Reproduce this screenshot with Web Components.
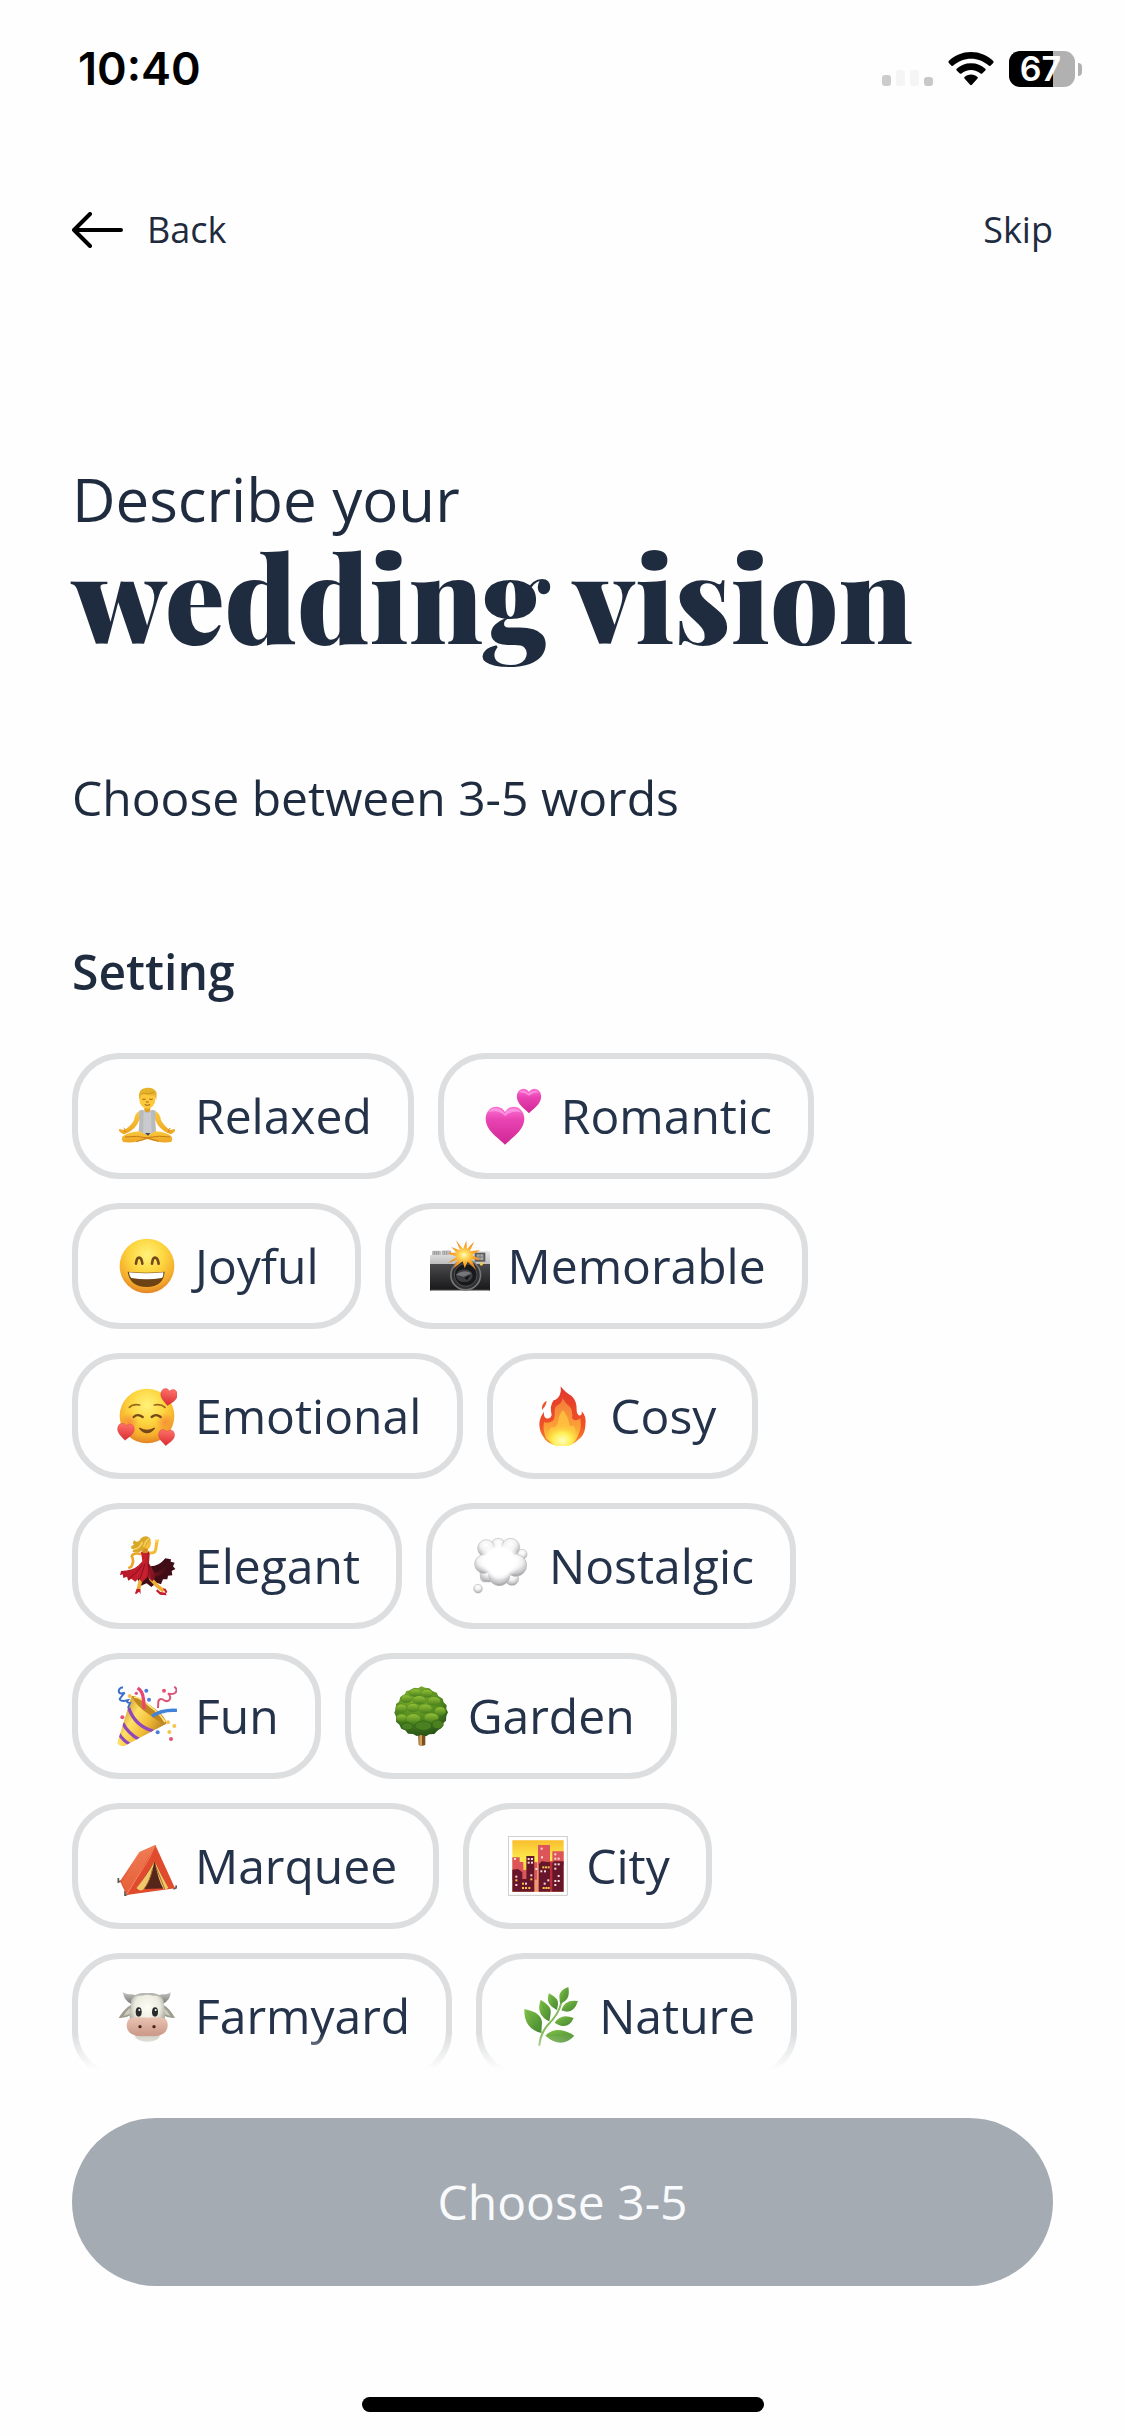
<!DOCTYPE html>
<html lang="en">
<head>
<meta charset="utf-8">
<meta name="viewport" content="width=device-width, initial-scale=1">
<title>Wedding vision</title>
<style>
	html, body {
		height: 100%;
	}

	body {
		margin: 0;
		background: #fefefe;
		color: #1f2b3e;
		font-family: "Open Sans", "Noto Sans", sans-serif;
		--ink: #1f2b3e;
		--chip-ink: #24324a;
		--line: #dcdee0;
		--gutter: 72px;
	}
</style>
</head>
<body>
<vision-screen>
	<status-bar slot="top" time="10:40" battery="67"></status-bar>
	<nav-bar slot="top"></nav-bar>
	<page-title lead="Describe your">wedding vision</page-title>
	<word-group label="Setting" hint="Choose between 3-5 words">
		<word-chip icon="relaxed">Relaxed</word-chip>
		<word-chip icon="romantic">Romantic</word-chip>
		<word-chip icon="joyful">Joyful</word-chip>
		<word-chip icon="memorable">Memorable</word-chip>
		<word-chip icon="emotional">Emotional</word-chip>
		<word-chip icon="cosy">Cosy</word-chip>
		<word-chip icon="elegant">Elegant</word-chip>
		<word-chip icon="nostalgic">Nostalgic</word-chip>
		<word-chip icon="fun">Fun</word-chip>
		<word-chip icon="garden">Garden</word-chip>
		<word-chip icon="marquee">Marquee</word-chip>
		<word-chip icon="city">City</word-chip>
		<word-chip icon="farmyard">Farmyard</word-chip>
		<word-chip icon="nature">Nature</word-chip>
	</word-group>
	<submit-bar slot="bottom">Choose 3-5</submit-bar>
</vision-screen>

<script>
// a heart that is 100 wide, with its centre at 0,0
const heart = 'M0 50C-18 32-50 12-50-18C-50-38-36-50-23-50C-12-50-4-44 0-36C4-44 12-50 23-50C36-50 50-38 50-18C50 12 18 32 0 50Z';

const faceGradient = `
	<radialGradient id="face" cx=".5" cy=".3" r=".7">
		<stop offset="0" stop-color="#fff27a"/>
		<stop offset=".45" stop-color="#fdd640"/>
		<stop offset=".8" stop-color="#f5ad2c"/>
		<stop offset="1" stop-color="#e38326"/>
	</radialGradient>`;

// lit windows of the city picture
const windows = (points, fill) => points.map(([x, y]) => `<rect x="${x}" y="${y}" width="6" height="6" fill="${fill}"/>`).join('');

// every drawing uses a 180 x 180 box
const drawings = {
	relaxed: `
		<defs>
			<linearGradient id="skin" x1="0" y1="0" x2="0" y2="1"><stop offset="0" stop-color="#fbc93d"/><stop offset="1" stop-color="#eda523"/></linearGradient>
		</defs>
		<path d="M82 58h18v20h-18z" fill="#e3a021"/>
		<path d="M66 76Q54 82 51 103Q42 120 22 132L7 129Q3 133 10 139L20 145Q46 136 60 116L70 96ZM116 76Q129 82 132 103Q141 120 159 132L172 129Q177 133 171 139L162 145Q137 136 122 116L112 96Z" fill="url(#skin)"/>
		<path d="M20 126q6 2 4 12M160 126q-6 2-4 12" fill="none" stroke="#c98116" stroke-width="3"/>
		<path d="M66 74L77 71Q91 85 105 71L116 74L115 106L118 150H64L67 106Z" fill="#b9babd"/>
		<path d="M80 76Q91 86 102 76L104 146H78Z" fill="#c9cacd"/>
		<path d="M68 136Q36 138 17 151Q11 160 19 168Q50 173 91 159Q132 173 162 168Q169 160 163 151Q147 138 115 136L91 148Z" fill="url(#skin)"/>
		<path d="M24 153Q60 148 91 156L125 166M160 153Q125 148 98 154L58 167" fill="none" stroke="#c57c18" stroke-width="3"/>
		<path d="M84 141h16l-7 8z" fill="#354963"/>
		<ellipse cx="91" cy="40" rx="24" ry="28" fill="#fdc93b"/>
		<path d="M66 36Q62 10 86 6Q110 2 119 20L118 42L112 28Q94 30 80 23Q74 29 72 28Q70 36 66 40Z" fill="#e6b12b"/>
		<path d="M73 23Q96 25 113 18" fill="none" stroke="#c18d1d" stroke-width="2"/>
		<path d="M76 39q6 3 10 0M97 39q6 3 10 0M87 48h8M83 56q8 4 16 0" fill="none" stroke="#965c14" stroke-width="3"/>`,
	romantic: `
		<defs>
			<linearGradient id="pink" x1="0" y1="0" x2="0" y2="1"><stop offset="0" stop-color="#fb74d4"/><stop offset=".35" stop-color="#e942b2"/><stop offset="1" stop-color="#cf2794"/></linearGradient>
		</defs>
		<path transform="translate(66 119) scale(1.16 1.14)" d="${heart}" fill="url(#pink)"/>
		<path transform="translate(138 45) scale(.73 .74)" d="${heart}" fill="url(#pink)"/>
		<path d="M16 79Q26 64 43 67Q56 70 65 82Q77 65 97 68Q109 70 116 80Q102 74 91 78Q76 80 67 91Q54 77 38 76Q26 75 16 79Z" fill="#ffb1ed" opacity=".6"/>
		<path d="M107 19Q119 8 137 22Q154 9 168 19Q154 17 138 29Q122 17 107 19Z" fill="#ffb1ed" opacity=".6"/>`,
	joyful: `
		<defs>${faceGradient}</defs>
		<circle cx="90" cy="90" r="82" fill="url(#face)"/>
		<path d="M57 83Q59 65 66 65Q74 65 76 83M105 83Q107 65 114 65Q122 65 125 83" fill="none" stroke="#73481a" stroke-width="8" stroke-linecap="round"/>
		<path d="M32 107Q89 113 143 107Q140 152 89 153Q38 152 32 107Z" fill="#6d4315"/>
		<path d="M36 109Q89 115 139 109Q140 123 134 126Q89 134 43 126Q37 121 36 109Z" fill="#fff"/>`,
	memorable: `
		<defs>
			<linearGradient id="silver" x1="0" y1="0" x2="0" y2="1"><stop offset="0" stop-color="#e8e8e8"/><stop offset="1" stop-color="#bbb"/></linearGradient>
			<linearGradient id="black" x1="0" y1="0" x2="0" y2="1"><stop offset="0" stop-color="#4a4a4c"/><stop offset="1" stop-color="#171719"/></linearGradient>
			<radialGradient id="flash"><stop offset="0" stop-color="#fffbd0"/><stop offset=".2" stop-color="#ffe166"/><stop offset=".6" stop-color="#f9a62a"/><stop offset="1" stop-color="#ea7f1a"/></radialGradient>
		</defs>
		<path d="M8 46h23v12H8zM36 45h26v13H36z" fill="#c6c6c6" stroke="#999" stroke-width="2"/>
		<path d="M13 47v9M19 47v9M25 47v9M43 47v9M50 47v9" stroke="#777" stroke-width="2"/>
		<path d="M0 60Q0 57 4 57H60L76 45H175Q180 45 180 50V86H0Z" fill="url(#silver)"/>
		<path d="M0 84H180V164H0Z" fill="url(#black)"/>
		<path d="M2 163H178" stroke="#aaa" stroke-width="3"/>
		<rect x="134" y="50" width="32" height="27" fill="#5c5c5e"/>
		<rect x="140" y="55" width="20" height="17" fill="#aaa"/>
		<path d="M150 55v17M140 63h20" stroke="#666" stroke-width="2"/>
		<circle cx="154" cy="84" r="5" fill="#f5c842"/>
		<circle cx="107" cy="117" r="47" fill="#777"/>
		<circle cx="107" cy="117" r="42" fill="#303032"/>
		<circle cx="107" cy="117" r="34" fill="#18191b" stroke="#666" stroke-width="2"/>
		<ellipse cx="103" cy="119" rx="25" ry="19" fill="#3c3d40"/>
		<path d="M77 116Q101 97 125 112L101 122Z" fill="#75767a"/>
		<path d="M103 126l18-9-10 15z" fill="#111"/>
		<path d="M78 13L99 39L109 14L111 39L132 17L120 45L150 43L126 57L154 72L124 70L138 101L113 77L104 97L98 76L69 98L84 71L54 80L80 62L50 50L80 50L64 33L90 43Z" fill="url(#flash)"/>`,
	emotional: `
		<defs>${faceGradient}
			<radialGradient id="blush"><stop offset="0" stop-color="#f7743c" stop-opacity=".6"/><stop offset="1" stop-color="#f7743c" stop-opacity="0"/></radialGradient>
			<linearGradient id="red" x1="0" y1="0" x2="0" y2="1"><stop offset="0" stop-color="#ff7168"/><stop offset="1" stop-color="#d92c32"/></linearGradient>
		</defs>
		<circle cx="90" cy="90" r="82" fill="url(#face)"/>
		<circle cx="37" cy="108" r="28" fill="url(#blush)"/>
		<circle cx="144" cy="108" r="28" fill="url(#blush)"/>
		<path d="M37 64Q48 53 68 57M112 57Q132 53 144 64" fill="none" stroke="#9b651c" stroke-width="5" stroke-linecap="round"/>
		<path d="M50 93Q62 82 77 93M104 93Q117 82 131 93" fill="none" stroke="#73481a" stroke-width="7" stroke-linecap="round"/>
		<path d="M68 127Q90 153 112 127Q90 139 68 127Z" fill="#73481a" stroke="#73481a" stroke-width="4" stroke-linejoin="round"/>
		<g fill="url(#red)" stroke="#c93435" stroke-width="2">
			<path transform="translate(155 34) rotate(8) scale(.5)" d="${heart}"/>
			<path transform="translate(26 138) rotate(5) scale(.5)" d="${heart}"/>
			<path transform="translate(148 155) rotate(5) scale(.48)" d="${heart}"/>
		</g>`,
	cosy: `
		<defs>
			<linearGradient id="outer" x1="0" y1="0" x2="0" y2="1"><stop offset="0" stop-color="#e2382a"/><stop offset=".65" stop-color="#ef5128"/><stop offset="1" stop-color="#f7912c"/></linearGradient>
			<linearGradient id="inner" x1="0" y1="0" x2="0" y2="1"><stop offset="0" stop-color="#f3793a"/><stop offset=".6" stop-color="#fba037"/><stop offset="1" stop-color="#ffdb3d"/></linearGradient>
			<radialGradient id="core" cx=".5" cy=".75" r=".6"><stop offset="0" stop-color="#fffdbe"/><stop offset=".5" stop-color="#ffef54"/><stop offset="1" stop-color="#ffc732" stop-opacity="0"/></radialGradient>
		</defs>
		<path d="M86 1Q98 18 119 30Q136 46 134 75Q137 91 146 88Q151 84 149 76Q165 91 160 120Q159 139 148 153L140 160Q123 180 90 180Q55 179 40 161L33 151Q22 135 22 114Q22 96 36 77Q34 91 42 97Q55 100 59 87Q52 59 65 43Q80 39 84 25Q88 15 86 1Z" fill="url(#outer)"/>
		<path d="M30 72Q27 54 44 44Q43 56 38 62Z" fill="#ed5431"/>
		<path d="M91 36Q100 51 114 63Q123 73 120 97Q130 109 145 97Q152 136 128 164Q110 178 90 178Q60 175 43 158Q31 133 36 108Q49 113 61 105Q69 101 68 74Q68 61 79 56Q92 49 91 36Z" fill="url(#inner)"/>
		<path d="M93 72Q109 93 112 116Q115 123 126 119Q138 145 120 165Q104 178 90 178Q70 176 57 163Q44 143 57 124Q75 127 78 108Q80 86 93 72Z" fill="#ffd143" opacity=".65"/>
		<ellipse cx="91" cy="144" rx="47" ry="39" fill="url(#core)"/>`,
	elegant: `
		<defs>
			<linearGradient id="dress" x1="0" y1="0" x2="1" y2="0"><stop offset="0" stop-color="#b51727"/><stop offset=".55" stop-color="#c8202e"/><stop offset=".75" stop-color="#6b111e"/><stop offset="1" stop-color="#3d0e16"/></linearGradient>
		</defs>
		<path d="M101 91Q126 91 145 67L162 70L161 77L173 80L168 91L175 99L164 105L166 118L153 119L151 130L138 130L132 145L119 140L103 153L89 142L72 149L61 128Z" fill="#400d17"/>
		<path d="M72 54Q47 49 44 61Q53 74 43 92L37 95" fill="none" stroke="#eca72b" stroke-width="8" stroke-linecap="round"/>
		<path d="M91 49Q114 55 116 41L120 16" fill="none" stroke="#f4bc36" stroke-width="9" stroke-linecap="round"/>
		<path d="M116 20l2-9M121 18l4-7" stroke="#ffd35a" stroke-width="5"/>
		<path d="M96 103Q110 116 101 128L119 148L140 165M76 117L67 147L64 165" fill="none" stroke="#eeae2f" stroke-width="11" stroke-linejoin="round"/>
		<path d="M54 172l5-14 11 1 1 15-5-7-9 8zM117 165l4-5 9 8 16 2 3 8-20-2zM137 157l9 1 5 10-4 4z" fill="#c71b2b"/>
		<path d="M72 48L80 45Q86 56 95 46L98 54L96 82L113 111Q134 107 150 81Q151 118 119 119L106 136L91 123L75 139L65 127L55 137L43 128L34 134L30 122L19 126L17 115L9 118L12 105Q46 105 65 88L76 76Z" fill="url(#dress)"/>
		<path d="M77 85Q61 112 35 128M84 83Q74 114 68 130M93 83Q99 111 91 123M96 89L107 132" fill="none" stroke="#861021" stroke-width="3"/>
		<path d="M74 35L95 32L91 50L78 51Z" fill="#d28e20"/>
		<ellipse cx="91" cy="22" rx="11" ry="17" fill="#f6be3d"/>
		<path d="M76 4Q93-5 101 12Q94 14 91 22Q86 28 82 39Q67 54 46 47L51 39Q40 41 43 31L51 26Q44 20 52 13Q58 21 67 14Q70 8 76 4Z" fill="#d9a829"/>
		<path d="M51 39Q69 38 76 18M80 32Q86 13 96 8" fill="none" stroke="#f6d15b" stroke-width="5"/>`,
	nostalgic: `
		<defs>
			<radialGradient id="puff" cx=".48" cy=".3" r=".72"><stop offset="0" stop-color="#fff"/><stop offset=".45" stop-color="#f1f1f2"/><stop offset=".8" stop-color="#c2c2c5"/><stop offset="1" stop-color="#8f8f94"/></radialGradient>
			<radialGradient id="middle"><stop offset="0" stop-color="#fff"/><stop offset=".7" stop-color="#fff"/><stop offset="1" stop-color="#fff" stop-opacity="0"/></radialGradient>
		</defs>
		<g fill="url(#puff)" stroke="#bcbcbf" stroke-width="2">
			<circle cx="42" cy="124" r="14"/>
			<circle cx="153" cy="55" r="15"/>
			<circle cx="82" cy="29" r="22"/>
			<circle cx="46" cy="37" r="26"/>
			<circle cx="119" cy="34" r="27"/>
			<circle cx="123" cy="128" r="20"/>
			<circle cx="53" cy="112" r="26"/>
			<circle cx="39" cy="84" r="28"/>
			<circle cx="134" cy="88" r="33"/>
			<circle cx="85" cy="117" r="32"/>
			<circle cx="21" cy="158" r="13"/>
		</g>
		<ellipse cx="86" cy="75" rx="62" ry="56" fill="url(#middle)"/>`,
	fun: `
		<defs>
			<linearGradient id="cone" x1="0" y1=".2" x2="1" y2=".8"><stop offset="0" stop-color="#bd8020"/><stop offset=".35" stop-color="#ffe165"/><stop offset=".6" stop-color="#f3bd38"/><stop offset="1" stop-color="#9d681b"/></linearGradient>
			<clipPath id="paper"><path d="M44 29Q84 40 148 113L22 180Q4 180 1 170Z"/></clipPath>
		</defs>
		<path d="M44 29Q84 40 148 113L22 180Q4 180 1 170Z" fill="url(#cone)"/>
		<g clip-path="url(#paper)" fill="none" stroke="#9148bd" stroke-width="10">
			<path d="M35 65Q53 119 108 135M17 111Q33 142 67 161M5 143Q20 165 37 174"/>
		</g>
		<path d="M44 30Q59 27 101 59Q147 90 147 110Q139 119 102 89Q57 61 44 30Z" fill="#c38722"/>
		<path d="M51 34Q66 31 99 61Q131 84 144 108" fill="none" stroke="#ffe476" stroke-width="5"/>
		<path d="M81 70Q81 45 78 31Q75 15 62 6" fill="none" stroke="#e84670" stroke-width="10"/>
		<path d="M105 91Q134 70 180 73" fill="none" stroke="#4283da" stroke-width="10"/>
		<path d="M18 4Q2 7 6 19Q11 26 23 20Q15 29 8 39Q9 48 32 43Q26 50 39 51L33 66" fill="none" stroke="#396fc9" stroke-width="6"/>
		<path d="M172 2Q184 12 174 21Q164 27 153 22Q165 34 156 43Q146 49 137 40Q127 37 124 46L123 66" fill="none" stroke="#dc5477" stroke-width="6"/>
		<g fill="#e15478"><circle cx="58" cy="22" r="5"/><circle cx="141" cy="14" r="6"/><circle cx="16" cy="94" r="6"/><circle cx="162" cy="159" r="6"/></g>
		<g fill="#487fd6"><circle cx="88" cy="14" r="6"/><circle cx="96" cy="41" r="6"/><circle cx="122" cy="139" r="6"/></g>
		<g fill="#f4c44f"><circle cx="38" cy="30" r="6"/><circle cx="153" cy="109" r="6"/><circle cx="172" cy="120" r="6"/><circle cx="157" cy="138" r="6"/></g>`,
	garden: `
		<defs>
			<radialGradient id="crown" cx=".4" cy=".2" r=".85"><stop offset="0" stop-color="#8dba31"/><stop offset=".5" stop-color="#568d20"/><stop offset="1" stop-color="#224d16"/></radialGradient>
			<linearGradient id="leafy" x1="0" y1="0" x2="0" y2="1"><stop offset="0" stop-color="#98c438"/><stop offset="1" stop-color="#487f1c"/></linearGradient>
		</defs>
		<path d="M84 137h22v40q-10 5-20 0z" fill="#7b521f"/>
		<path d="M88 144h8v34h-8z" fill="#d4a159"/>
		<path d="M94 1L105 5L118 7L127 15L140 20L145 30L158 38L161 49L170 58L169 69L174 79L169 90L168 104L158 113L153 127L142 134L133 144L118 145L108 151L95 147L80 150L69 144L54 143L46 133L34 128L28 116L18 107L19 94L13 80L18 67L18 54L27 47L31 33L43 27L49 15L64 12L72 5L84 7Z" fill="url(#crown)"/>
		<g fill="url(#leafy)" stroke="#4f8620" stroke-width="2">
			<ellipse cx="77" cy="20" rx="20" ry="12"/><ellipse cx="110" cy="22" rx="18" ry="12"/>
			<ellipse cx="49" cy="38" rx="17" ry="12"/><ellipse cx="88" cy="42" rx="20" ry="13"/><ellipse cx="132" cy="45" rx="20" ry="13"/>
			<ellipse cx="34" cy="67" rx="17" ry="13"/><ellipse cx="69" cy="65" rx="19" ry="13"/><ellipse cx="106" cy="68" rx="21" ry="14"/><ellipse cx="150" cy="75" rx="17" ry="13"/>
			<ellipse cx="35" cy="96" rx="16" ry="12"/><ellipse cx="70" cy="98" rx="22" ry="15"/><ellipse cx="124" cy="95" rx="22" ry="14"/>
		</g>
		<g fill="#4a801f" stroke="#2c5d17" stroke-width="2">
			<ellipse cx="100" cy="119" rx="25" ry="14"/><ellipse cx="52" cy="121" rx="17" ry="11"/><ellipse cx="143" cy="115" rx="17" ry="13"/>
		</g>`,
	marquee: `
		<defs>
			<linearGradient id="canvas" x1="0" y1="0" x2="0" y2="1"><stop offset="0" stop-color="#f49065"/><stop offset="1" stop-color="#db4425"/></linearGradient>
		</defs>
		<path d="M4 126v12l8-3M24 165v13l9-4M169 159l8-3 1-8" fill="none" stroke="#5b5750" stroke-width="5"/>
		<path d="M67 48L115 27L29 176L9 136Z" fill="url(#canvas)"/>
		<path d="M68 48Q49 91 14 137L30 174L83 90L115 27Z" fill="#ed7047" opacity=".6"/>
		<path d="M115 27L29 177L174 157Z" fill="#df4b2c"/>
		<path d="M115 27L95 70L28 176" fill="none" stroke="#f5805a" stroke-width="3"/>
		<path d="M113 77L58 160L153 157Z" fill="#56261b"/>
		<path d="M112 77Q93 112 58 157Q69 168 81 160Q103 125 112 77ZM114 78Q124 133 139 158Q146 162 154 156Q132 117 114 78Z" fill="#f2c769"/>
		<path d="M107 96Q98 140 80 160M117 93L143 159" fill="none" stroke="#a36d34" stroke-width="3"/>`,
	city: `
		<defs>
			<linearGradient id="sky" x1="0" y1="0" x2="0" y2="1"><stop offset="0" stop-color="#f9bd2d"/><stop offset=".35" stop-color="#fce94c"/><stop offset="1" stop-color="#f3a83a"/></linearGradient>
		</defs>
		<path d="M1 1H178V178H1Z" fill="#fff" stroke="#aaa" stroke-width="2"/>
		<path d="M13 13H167V167H13Z" fill="url(#sky)"/>
		<path d="M79 79H92V167H79Z" fill="#f29477"/>
		<path d="M13 64H35V78H46V102H56V132H13ZM90 27H126V86H90ZM133 46H167V87H133ZM79 79H87V131H79Z" fill="#dc555a"/>
		<path d="M124 76H137V167H124Z" fill="#b72f38"/>
		<path d="M13 101L30 99L43 109V129H55V60H79V167H13ZM92 85L101 76L126 79V167H92ZM133 83L138 76H167V167H133Z" fill="#66152b"/>
		${windows([[18, 66], [98, 35], [99, 61], [139, 52], [139, 65], [149, 65], [59, 66], [69, 66], [59, 77], [69, 77], [82, 96], [97, 103], [108, 103], [139, 82], [149, 82], [139, 95], [149, 117], [139, 132], [149, 132], [139, 144], [22, 119], [67, 115], [118, 130], [22, 144], [51, 140], [107, 140]], '#f9dcda')}
		${windows([[103, 91], [111, 91], [119, 91], [67, 127], [22, 130], [42, 140], [42, 153], [51, 153], [61, 153], [104, 153], [112, 153], [119, 153]], '#f4c844')}`,
	farmyard: `
		<defs>
			<linearGradient id="horn" x1="0" y1="0" x2="0" y2="1"><stop offset="0" stop-color="#c6c7c4"/><stop offset="1" stop-color="#777a78"/></linearGradient>
			<radialGradient id="hide" cx=".5" cy=".35" r=".6"><stop offset="0" stop-color="#fffef5"/><stop offset=".6" stop-color="#ebeadf"/><stop offset="1" stop-color="#98978d"/></radialGradient>
			<linearGradient id="snout" x1="0" y1="0" x2="0" y2="1"><stop offset="0" stop-color="#eac3b3"/><stop offset="1" stop-color="#c99685"/></linearGradient>
		</defs>
		<path d="M18 18Q26 25 42 25L57 27L42 53Q20 43 18 18ZM161 18Q154 25 138 25L123 27L138 53Q160 43 161 18Z" fill="url(#horn)"/>
		<path d="M43 56Q23 66 5 96Q23 98 42 87ZM138 56Q158 66 174 96Q155 98 137 87Z" fill="#9d9c90"/>
		<path d="M38 66Q25 77 20 90L41 83ZM142 66Q154 77 160 90L139 83Z" fill="#cfcbba"/>
		<ellipse cx="91" cy="149" rx="37" ry="18" fill="#d4d4ca"/>
		<path d="M43 42Q53 22 91 22Q129 22 139 42L144 84Q145 130 122 143H60Q37 130 38 86Z" fill="url(#hide)"/>
		<path d="M45 36Q62 18 91 22Q120 18 137 36Q121 26 108 29Q91 24 74 29Q58 26 45 36Z" fill="#b4b5b1"/>
		<ellipse cx="65" cy="78" rx="9" ry="14" fill="#282b29"/>
		<ellipse cx="114" cy="78" rx="9" ry="14" fill="#282b29"/>
		<circle cx="67" cy="72" r="3" fill="#fff"/>
		<circle cx="116" cy="72" r="3" fill="#fff"/>
		<path d="M34 101Q43 91 91 95Q139 91 148 101Q158 121 145 138Q132 150 113 151H69Q48 150 36 138Q23 121 34 101Z" fill="url(#snout)"/>
		<circle cx="69" cy="122" r="5" fill="#45251e"/>
		<circle cx="111" cy="122" r="5" fill="#45251e"/>`,
	nature: `
		<defs>
			<linearGradient id="leaf" x1="0" y1="0" x2="1" y2="1"><stop offset="0" stop-color="#84c44b"/><stop offset="1" stop-color="#40832c"/></linearGradient>
		</defs>
		<path d="M55 177Q57 145 81 116Q114 84 121 49" fill="none" stroke="#83b95c" stroke-width="6" stroke-linecap="round"/>
		<g fill="url(#leaf)">
			<path d="M10 69Q59 79 63 107L61 141Q8 128 10 69Z"/>
			<path d="M59 41Q95 62 89 83L85 106Q43 86 59 41Z"/>
			<path d="M84 22Q114 38 111 54L108 72Q71 54 84 22Z"/>
			<path d="M142 3Q115 12 115 32L117 53Q150 43 142 3Z"/>
			<path d="M171 45Q130 39 121 73Q157 88 171 45Z"/>
			<path d="M158 96Q120 80 101 110Q140 136 158 96Z"/>
			<path d="M160 149Q106 115 73 149Q121 191 160 149Z"/>
		</g>
		<path d="M17 76Q44 101 61 139M62 49L85 101M89 29L107 66M138 9L118 48M165 49L125 72M152 97L106 109M154 149L78 148" fill="none" stroke="#5a9e39" stroke-width="2"/>`
};

class EmojiIcon extends HTMLElement {
	constructor() {
		super();
		this.attachShadow({mode: 'open'});
	}

	connectedCallback() {
		this.shadowRoot.innerHTML = `
		<style>
			:host {
				display: block;
				width: 60px;
				height: 60px;
				flex: none;
			}

			svg {
				display: block;
				width: 100%;
				height: 100%;
			}
		</style>
		<svg viewBox="0 0 180 180" aria-hidden="true">${drawings[this.getAttribute('name')] || ''}</svg>`;
	}
}

class WordChip extends HTMLElement {
	constructor() {
		super();
		this.attachShadow({mode: 'open'});
	}

	connectedCallback() {
		this.shadowRoot.innerHTML = `
		<style>
			:host {
				display: block;
			}

			button {
				display: flex;
				align-items: center;
				gap: 18px;
				padding: 21px 36px 21px 39px;
				border: 6px solid var(--line);
				border-radius: 48px;
				background: transparent;
				color: var(--chip-ink);
				cursor: pointer;
				font-family: inherit;
				font-size: 48px;
				line-height: 72px;
				white-space: nowrap;
			}

			button[aria-pressed="true"] {
				border-color: var(--ink);
			}
		</style>
		<button type="button" aria-pressed="false">
			<emoji-icon name="${this.getAttribute('icon')}"></emoji-icon>
			<span><slot></slot></span>
		</button>`;

		this.shadowRoot.querySelector('button').addEventListener('click', this._toggle.bind(this));
	}

	_toggle(event) {
		const $button = event.currentTarget;
		$button.setAttribute('aria-pressed', $button.getAttribute('aria-pressed') !== 'true');
	}
}

class WordGroup extends HTMLElement {
	constructor() {
		super();
		this.attachShadow({mode: 'open'});
	}

	connectedCallback() {
		this.shadowRoot.innerHTML = `
		<style>
			:host {
				display: block;
			}

			p, h2 {
				margin: 0;
				font-size: 48px;
				line-height: 72px;
			}

			p {
				margin-bottom: 102px;
			}

			h2 {
				margin-bottom: 45px;
				font-weight: 600;
			}

			.words {
				display: flex;
				flex-wrap: wrap;
				gap: 24px;
			}
		</style>
		<p>${this.getAttribute('hint')}</p>
		<h2>${this.getAttribute('label')}</h2>
		<div class="words"><slot></slot></div>`;
	}
}

class PageTitle extends HTMLElement {
	constructor() {
		super();
		this.attachShadow({mode: 'open'});
	}

	connectedCallback() {
		this.shadowRoot.innerHTML = `
		<style>
			:host {
				display: block;
				margin-bottom: 107px;
			}

			h1 {
				margin: 0;
				font-weight: 400;
			}

			.lead {
				display: block;
				font-size: 60px;
				line-height: 72px;
			}

			.name {
				display: block;
				font-family: "Playfair Display", "Liberation Serif", serif;
				font-size: 119px;
				font-weight: 900;
				line-height: 120px;
			}
		</style>
		<h1>
			<span class="lead">${this.getAttribute('lead')}</span>
			<span class="name"><slot></slot></span>
		</h1>`;
	}
}

class StatusBar extends HTMLElement {
	constructor() {
		super();
		this.attachShadow({mode: 'open'});
	}

	connectedCallback() {
		const level = this.getAttribute('battery');
		this.shadowRoot.innerHTML = `
		<style>
			:host {
				display: flex;
				align-items: center;
				justify-content: space-between;
				padding: 39px 43px 33px 78px;
				color: #000;
				font-family: Inter, "Liberation Sans", sans-serif;
			}

			.time {
				font-size: 45px;
				font-weight: 600;
				line-height: 60px;
			}

			.icons, .battery {
				display: flex;
				align-items: center;
			}

			.icons {
				gap: 15px;
			}

			svg {
				display: block;
			}

			.battery {
				gap: 3px;
			}

			.level {
				box-sizing: border-box;
				width: 66px;
				padding-right: 3px;
				border-radius: 11px;
				background: linear-gradient(to right, #000 ${level}%, #b1b1b1 ${level}%);
				color: #fff;
				font-size: 34px;
				font-weight: 600;
				line-height: 36px;
				text-align: center;
			}

			.cap {
				width: 4px;
				height: 13px;
				border-radius: 0 4px 4px 0;
				background: #b1b1b1;
			}
		</style>
		<span class="time">${this.getAttribute('time')}</span>
		<span class="icons">
			<svg width="51" height="34" viewBox="0 0 51 34" aria-hidden="true">
				<rect x="0" y="23" width="9" height="11" rx="3" fill="#ccc"/>
				<rect x="14" y="18" width="9" height="16" rx="3" fill="#f5f5f5"/>
				<rect x="28" y="18" width="9" height="16" rx="3" fill="#f5f5f5"/>
				<rect x="42" y="25" width="9" height="9" rx="3" fill="#c8c8c8"/>
			</svg>
			<svg width="46" height="34" viewBox="0 0 46 34" aria-hidden="true">
				<path d="M23 0C32 0 39.500 3.400 45.300 9.100Q46 10 45.200 10.900L42.500 13.700Q41.600 14.400 40.700 13.600C35.700 9 29.600 6.700 23 6.700S10.300 9 5.300 13.600Q4.400 14.400 3.500 13.700L.8 10.900Q0 10 .7 9.100C6.500 3.400 14 0 23 0Z"/>
				<path d="M23 11.200C28.800 11.200 33.600 13.200 37.300 16.800Q38.200 17.700 37.300 18.600L34.200 21.500Q33.400 22.200 32.500 21.500C29.700 19.200 26.600 18 23 18S16.300 19.200 13.500 21.500Q12.600 22.200 11.800 21.500L8.700 18.600Q7.800 17.700 8.700 16.800C12.400 13.200 17.200 11.200 23 11.200Z"/>
				<path d="M23 22.400C25.700 22.400 27.800 23.300 29.500 24.900Q30.300 25.700 29.500 26.500L23.900 32.700Q23 33.600 22.100 32.700L16.500 26.500Q15.700 25.700 16.500 24.900C18.200 23.300 20.300 22.400 23 22.400Z"/>
			</svg>
			<span class="battery"><span class="level">${level}</span><span class="cap"></span></span>
		</span>`;
	}
}

class NavBar extends HTMLElement {
	constructor() {
		super();
		this.attachShadow({mode: 'open'});
	}

	connectedCallback() {
		this.shadowRoot.innerHTML = `
		<style>
			:host {
				display: block;
				padding: 74px var(--gutter) 0;
			}

			nav {
				display: flex;
				justify-content: space-between;
			}

			button {
				display: flex;
				align-items: center;
				gap: 24px;
				padding: 0;
				border: 0;
				background: none;
				color: inherit;
				cursor: pointer;
				font-family: inherit;
				font-size: 36px;
				line-height: 48px;
			}
		</style>
		<nav>
			<button type="button">
				<svg width="51" height="36" viewBox="0 0 51 36" fill="none" stroke="#000" stroke-width="4" stroke-linecap="round" stroke-linejoin="round" aria-hidden="true">
					<path d="M18 2L2 18L18 34M2 18H49"/>
				</svg>
				<span>Back</span>
			</button>
			<button type="button">Skip</button>
		</nav>`;
	}
}

class SubmitBar extends HTMLElement {
	constructor() {
		super();
		this.attachShadow({mode: 'open'});
	}

	connectedCallback() {
		this.shadowRoot.innerHTML = `
		<style>
			:host {
				display: block;
				padding: 48px var(--gutter) 24px;
			}

			button {
				display: block;
				width: 100%;
				padding: 48px;
				border: 0;
				border-radius: 84px;
				background: #a5abb3;
				color: #f8fafc;
				font-family: inherit;
				font-size: 48px;
				line-height: 72px;
			}

			.home {
				width: 402px;
				height: 15px;
				margin: 111px auto 0;
				border-radius: 8px;
				background: #000;
			}
		</style>
		<button type="button" disabled><slot></slot></button>
		<div class="home"></div>`;
	}
}

class VisionScreen extends HTMLElement {
	constructor() {
		super();
		this.attachShadow({mode: 'open'});
	}

	connectedCallback() {
		this.shadowRoot.innerHTML = `
		<style>
			:host {
				display: flex;
				flex-direction: column;
				height: 100vh;
			}

			header, footer {
				flex: none;
			}

			/* the list scrolls and fades out above the button */
			main {
				flex: 1;
				min-height: 0;
				overflow-y: auto;
				padding: 209px var(--gutter) 0;
				scrollbar-width: none;
				-webkit-mask-image: linear-gradient(to bottom, #000 calc(100% - 36px), transparent);
				mask-image: linear-gradient(to bottom, #000 calc(100% - 36px), transparent);
			}
		</style>
		<header><slot name="top"></slot></header>
		<main><slot></slot></main>
		<footer><slot name="bottom"></slot></footer>`;
	}
}

window.customElements.define('emoji-icon', EmojiIcon);
window.customElements.define('word-chip', WordChip);
window.customElements.define('word-group', WordGroup);
window.customElements.define('page-title', PageTitle);
window.customElements.define('status-bar', StatusBar);
window.customElements.define('nav-bar', NavBar);
window.customElements.define('submit-bar', SubmitBar);
window.customElements.define('vision-screen', VisionScreen);
</script>
</body>
</html>
